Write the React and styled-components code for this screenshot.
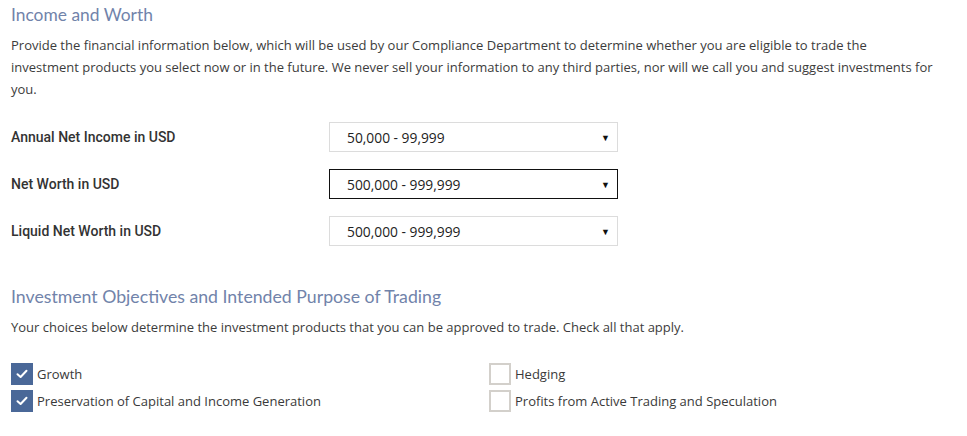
import React from "react";
import styled, { createGlobalStyle } from "styled-components";

const Global = createGlobalStyle`
  html, body { margin: 0; padding: 0; background: #fff; }
  body { font-family: "Open Sans", Lato, sans-serif; color: #3a3a3a; }
`;

const Page = styled.div`
  padding: 4px 11px 0 11px;
  width: 945px;
`;

const Heading = styled.h2`
  margin: 0;
  font-family: Lato, sans-serif;
  font-weight: 400;
  font-size: ${(p) => p.$size || 17.4}px;
  line-height: 22px;
  color: #7183aa;
  margin-top: ${(p) => p.$top || 0}px;
`;

const Intro = styled.p`
  margin: 8px 0 0 0;
  font-family: "Open Sans", sans-serif;
  font-size: 13px;
  line-height: 22px;
  color: #3c3c3c;
  max-width: 925px;
`;

const Fields = styled.div`
  margin-top: 22px;
  display: flex;
  flex-direction: column;
  gap: 17px;
`;

const Row = styled.div`
  display: grid;
  grid-template-columns: 318px 289px;
  align-items: center;
  height: 30px;
`;

const Label = styled.label`
  font-family: Roboto, sans-serif;
  font-weight: 500;
  font-size: 14px;
  color: #333;
`;

const SelectBox = styled.div`
  box-sizing: border-box;
  height: 30px;
  border: 1px solid ${(p) => (p.$focus ? "#111" : "#dcdcdc")};
  display: flex;
  align-items: center;
  justify-content: space-between;
  padding: 0 7px 0 17px;
  font-size: 13.8px;
  color: #222;
`;

const Caret = styled.span`
  font-size: 9px;
  color: #111;
`;

const Checks = styled.div`
  margin-top: 25px;
  display: grid;
  grid-template-columns: 478px 1fr;
  row-gap: 5px;
`;

const CheckItem = styled.div`
  display: flex;
  align-items: center;
  gap: 4px;
  font-size: 13px;
  color: #3a3a3a;
  height: 22px;
`;

const Box = styled.span`
  box-sizing: border-box;
  width: 22px;
  height: 22px;
  display: inline-flex;
  align-items: center;
  justify-content: center;
  background: ${(p) => (p.$checked ? "#4a6898" : "#fff")};
  border: ${(p) => (p.$checked ? "none" : "2px solid #d3d0cb")};
`;

const Tick = () => (
  <svg width="12" height="10" viewBox="0 0 12 10">
    <path d="M1.5 5.2 L4.6 8 L10.5 1.8" fill="none" stroke="#fff" strokeWidth="2" strokeLinecap="round" strokeLinejoin="round" />
  </svg>
);

const Check = ({ checked, children }) => (
  <CheckItem>
    <Box $checked={checked}>{checked && <Tick />}</Box>
    {children}
  </CheckItem>
);

const fields = [
  ["Annual Net Income in USD", "50,000 - 99,999", false],
  ["Net Worth in USD", "500,000 - 999,999", true],
  ["Liquid Net Worth in USD", "500,000 - 999,999", false],
];

export default function App() {
  return (
    <Page>
      <Global />
      <Heading>Income and Worth</Heading>
      <Intro>
        Provide the financial information below, which will be used by our Compliance Department to determine whether you are eligible to trade the investment products you select now or in the future. We never sell your information to any third parties, nor will we call you and suggest investments for you.
      </Intro>
      <Fields>
        {fields.map(([l, v, f]) => (
          <Row key={l}>
            <Label>{l}</Label>
            <SelectBox $focus={f}>
              <span>{v}</span>
              <Caret>▼</Caret>
            </SelectBox>
          </Row>
        ))}
      </Fields>
      <Heading $top={40} $size={17.7}>Investment Objectives and Intended Purpose of Trading</Heading>
      <Intro>Your choices below determine the investment products that you can be approved to trade. Check all that apply.</Intro>
      <Checks>
        <Check checked>Growth</Check>
        <Check>Hedging</Check>
        <Check checked>Preservation of Capital and Income Generation</Check>
        <Check>Profits from Active Trading and Speculation</Check>
      </Checks>
    </Page>
  );
}
